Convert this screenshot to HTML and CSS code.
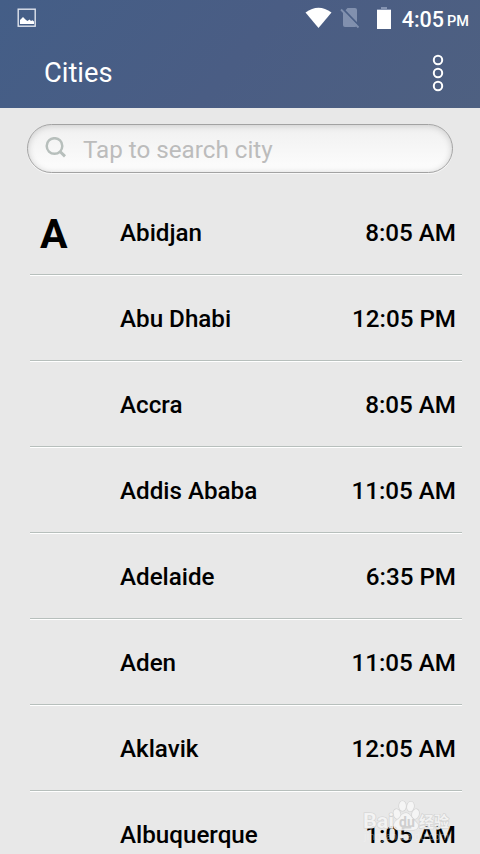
FILE: index.html
```html
<!DOCTYPE html>
<html lang="en">
  <head>
    <meta charset="UTF-8" />
    <meta name="viewport" content="width=device-width, initial-scale=1.0" />
    <title>Cities</title>
    <link rel="stylesheet" href="styles.css">
  </head>
  <body>
    <header>
      <div class="status">
        <svg class="picture" width="20" height="20" viewBox="0 0 20 20">
          <rect x="1.2" y="1.2" width="17" height="17" fill="none" stroke="#dfe4ed" stroke-width="1.4" />
          <path d="M3 16v-4l3-3 3 3 1.500 1 2-1.500 1.500 1.500 1.500-.8 1.500 1.300V16z" fill="#fff" />
        </svg>
        <svg class="wifi" width="28" height="22" viewBox="0 0 28 22">
          <path d="M.500 5.500Q13.500-4 26.500 5.500L13.500 21z" fill="#fff" />
        </svg>
        <svg class="sim" width="20" height="22" viewBox="0 0 20 22">
          <path d="M7.500 1H15q2 0 2 2v15q0 2-2 2H5q-2 0-2-2V6z" fill="#8190ae" />
          <path d="M2.500 1.500l17 17.500" stroke="#4a5e85" stroke-width="1.800" />
          <path d="M1 2.500l17.500 18" stroke="#8190ae" stroke-width="1.800" />
        </svg>
        <svg class="battery" width="14" height="22" viewBox="0 0 14 22">
          <path d="M4 0h6v2h4v2H0V2h4z" fill="#8493b1" />
          <path d="M0 3h14v19H0z" fill="#fff" />
        </svg>
        <span class="clock">4:05</span><span class="pm">PM</span>
      </div>
      <div class="bar">
        <h1>Cities</h1>
        <svg width="12" height="38" viewBox="0 0 12 38" fill="none" stroke="#fff" stroke-width="2">
          <circle cx="6" cy="6" r="4.200" />
          <circle cx="6" cy="19" r="4.200" />
          <circle cx="6" cy="32" r="4.200" />
        </svg>
      </div>
    </header>

    <div class="search">
      <svg width="22" height="22" viewBox="0 0 22 22" fill="none" stroke="#b7bfbc">
        <circle cx="9.500" cy="9" r="7.800" stroke-width="2.500" />
        <path d="M15 14.500l5 4.800" stroke-width="3" />
      </svg>
      <span>Tap to search city</span>
    </div>

    <ul class="cities">
      <li><b>A</b><span>Abidjan</span><time>8:05 AM</time></li>
      <li><span>Abu Dhabi</span><time>12:05 PM</time></li>
      <li><span>Accra</span><time>8:05 AM</time></li>
      <li><span>Addis Ababa</span><time>11:05 AM</time></li>
      <li><span>Adelaide</span><time>6:35 PM</time></li>
      <li><span>Aden</span><time>11:05 AM</time></li>
      <li><span>Aklavik</span><time>12:05 AM</time></li>
      <li><span>Albuquerque</span><time>1:05 AM</time></li>
    </ul>

    <svg class="watermark" width="100" height="48" viewBox="0 0 100 48">
      <g class="mark">
        <ellipse cx="36" cy="15" rx="3.500" ry="5" transform="rotate(-15 36 15)" />
        <ellipse cx="41.500" cy="7" rx="3.500" ry="5" />
        <ellipse cx="49.500" cy="7.500" rx="3.500" ry="5" transform="rotate(10 49.500 7.500)" />
        <ellipse cx="54.500" cy="15" rx="3.500" ry="5" transform="rotate(15 54.500 15)" />
        <path d="M45 14c4 0 5 4 8 7s5 4 4 7-4 3-7 3H39c-4 0-7-2-6-6s4-4 6-7 3-4 6-4z" />
        <text x="2" y="29" font-size="20" font-weight="bold" textLength="31" lengthAdjust="spacingAndGlyphs">Bai</text>
        <text class="cn" x="58" y="28" font-size="15" font-weight="bold">经验</text>
      </g>
      <text x="38" y="28" font-size="14" font-weight="bold" fill="#cfcfcf">du</text>
      <text x="3" y="41" font-size="10" fill="#f5f5f5" fill-opacity=".4" textLength="85">jingyan.baidu.com</text>
    </svg>
  </body>
</html>
```
FILE: styles.css
```css
* {
  box-sizing: border-box;
}

body {
  position: relative;
  width: 480px;
  height: 854px;
  margin: 0;
  overflow: hidden;
  background: #e8e8e8;
  color: #000;
  font-family: Roboto, "Noto Sans CJK SC", sans-serif;
}

header {
  height: 108px;
  background: linear-gradient(130deg, #445e87, #4a5d84 50%, #4e6081);
  color: #fff;
}

.status {
  display: flex;
  align-items: center;
  height: 36px;
  padding: 0 11px 0 17px;
}
.wifi {
  margin-left: auto;
}
.sim {
  margin-left: 7px;
}
.battery {
  margin: 0 0 0 17px;
}
.clock {
  margin: 2px 0 0 11px;
  font-size: 21.5px;
  font-weight: 500;
}
.pm {
  margin: 6px 0 0 3px;
  font-size: 14.5px;
  font-weight: 500;
}

.bar {
  display: flex;
  align-items: center;
  justify-content: space-between;
  height: 74px;
  padding: 0 36px 0 44px;
}
h1 {
  margin: 0;
  font-size: 27.3px;
  font-weight: 400;
}

.search {
  display: flex;
  align-items: center;
  height: 49px;
  margin: 16px 27px 17px;
  padding-left: 17px;
  border: 1px solid #a2a2a2;
  border-radius: 25px;
  background: linear-gradient(#f0f0f0, #fdfdfd);
  box-shadow: inset 0 1px 6px #ccc, 0 1px 0 #f8f8f8;
  color: #bcbcbc;
  font-size: 24.2px;
}
.search svg {
  margin-top: -1px;
}
.search span {
  margin: 3px 0 0 16px;
}

.cities {
  margin: 0;
  padding: 0;
  list-style: none;
}
.cities li {
  display: flex;
  align-items: center;
  height: 86px;
  margin: 0 18px 0 30px;
  padding: 0 6px 0 10px;
  border-bottom: 1px solid #fff;
  box-shadow: inset 0 -1px #b7bfbc;
  font-size: 24.2px;
  font-weight: 500;
}
.cities b {
  width: 80px;
  margin: 2px -80px 0 0;
  font-size: 41px;
  font-weight: 700;
}
.cities span {
  margin-left: 80px;
}
.cities time {
  margin-left: auto;
}

.watermark {
  position: absolute;
  left: 361px;
  top: 799px;
}
.mark {
  fill: #f7f7f7;
  fill-opacity: 0.85;
  stroke: #d2d2d2;
  stroke-width: 1.2;
  paint-order: stroke;
}
.cn {
  font-family: "Noto Sans CJK SC", sans-serif;
}
```
